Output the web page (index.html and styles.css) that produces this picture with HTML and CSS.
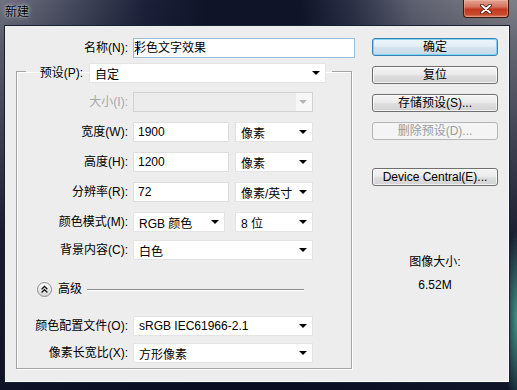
FILE: index.html
```html
<!DOCTYPE html>
<html>
<head>
  <title>新建</title>
  <link rel="stylesheet" href="styles.css">
</head>
<body>
  <div class="window">
    <div class="titlebar">
      <span class="title">新建</span>
      <div class="close">
        <svg width="12" height="10" viewBox="0 0 12 10">
          <path d="M2 1.5 L10 8.5 M10 1.5 L2 8.5" stroke="#3a1208" stroke-width="3.6" stroke-linecap="round"/>
          <path d="M2 1.5 L10 8.5 M10 1.5 L2 8.5" stroke="#fff" stroke-width="2" stroke-linecap="round"/>
        </svg>
      </div>
    </div>

    <div class="client">
      <div class="main">
        <div class="name-row">
          <label>名称(N):</label>
          <div class="field focused"><span class="caret"></span><span class="clip">彩色文字效果</span></div>
        </div>

        <fieldset class="group">
          <legend>
            <div class="legend-row">
              <label>预设(P):</label>
              <div class="select preset">自定</div>
            </div>
          </legend>

          <div class="rows">
            <div class="row">
              <label class="disabled">大小(I):</label>
              <div class="select full disabled"></div>
            </div>
            <div class="row">
              <label>宽度(W):</label>
              <div class="field num">1900</div>
              <div class="select unit">像素</div>
            </div>
            <div class="row">
              <label>高度(H):</label>
              <div class="field num">1200</div>
              <div class="select unit">像素</div>
            </div>
            <div class="row">
              <label>分辨率(R):</label>
              <div class="field num">72</div>
              <div class="select unit">像素/英寸</div>
            </div>
            <div class="row">
              <label>颜色模式(M):</label>
              <div class="select mode">RGB 颜色</div>
              <div class="select unit bits">8 位</div>
            </div>
            <div class="row bg-row">
              <label>背景内容(C):</label>
              <div class="select full">白色</div>
            </div>

            <div class="advanced">
              <svg width="15" height="15" viewBox="0 0 15 15">
                <defs>
                  <linearGradient id="adv" x1="0" y1="0" x2="0" y2="1">
                    <stop offset="0" stop-color="#ffffff"/>
                    <stop offset="1" stop-color="#d4d4d4"/>
                  </linearGradient>
                </defs>
                <circle cx="7.5" cy="7.5" r="7" fill="url(#adv)" stroke="#8d8d8d"/>
                <path d="M4.6 7.2 L7.5 4.4 L10.4 7.2 M4.6 10.6 L7.5 7.8 L10.4 10.6" fill="none" stroke="#1e1e1e" stroke-width="1.4"/>
              </svg>
              <span class="adv-label">高级</span>
              <span class="adv-line"></span>
            </div>

            <div class="row profile-row">
              <label>颜色配置文件(O):</label>
              <div class="select full">sRGB IEC61966-2.1</div>
            </div>
            <div class="row aspect-row">
              <label>像素长宽比(X):</label>
              <div class="select full">方形像素</div>
            </div>
          </div>
        </fieldset>
      </div>

      <div class="side">
        <button class="btn default">确定</button>
        <button class="btn">复位</button>
        <button class="btn">存储预设(S)...</button>
        <button class="btn" disabled>删除预设(D)...</button>
        <button class="btn device">Device Central(E)...</button>

        <div class="info">
          <div>图像大小:</div>
          <div class="size">6.52M</div>
        </div>
      </div>
    </div>
  </div>
</body>
</html>
```

FILE: styles.css
```css
body {
  margin: 0;
  background: #0d1226;
  font-family: "Liberation Sans", "Noto Sans CJK SC", sans-serif;
  font-size: 12px;
  color: #000;
}
.window {
  width: 517px;
  height: 390px;
  display: flex;
  flex-direction: column;
  background:
    radial-gradient(ellipse 14px 90px at 517px 320px, rgba(70, 170, 150, 0.85), rgba(70, 170, 150, 0) 100%),
    linear-gradient(180deg, rgba(10, 14, 34, 0) 0%, rgba(10, 14, 34, 0.2) 10%, rgba(10, 14, 34, 0.85) 60%, rgba(10, 14, 34, 0.95) 100%),
    linear-gradient(90deg, #6f7380 0%, #4c5063 12%, #1c2139 28%, #0f1429 40%, #0f1429 58%, #2b3047 68%, #5e6170 80%, #74767f 92%, #7e8089 100%);
}

/* title bar */
.titlebar {
  height: 25px;
  display: flex;
  justify-content: space-between;
  align-items: flex-start;
}
.title {
  margin: 5px 0 0 5px;
  line-height: 15px;
  text-shadow: 0 0 5px rgba(255, 255, 255, 0.7), 0 0 2px rgba(255, 255, 255, 0.6);
}
.close {
  width: 44px;
  height: 17px;
  margin-right: 8px;
  border: 1px solid #3d1610;
  border-top: none;
  border-radius: 0 0 4px 4px;
  background: linear-gradient(180deg, #e2a796 0%, #d5725d 40%, #c2391f 55%, #c84a2c 85%, #d9866a 100%);
  box-shadow: inset 0 0 0 1px rgba(255, 200, 180, 0.35);
  display: flex;
  align-items: center;
  justify-content: center;
}

/* client area */
.client {
  flex: 1;
  margin: 0 7px 7px 4px;
  border: 1px solid #1b2030;
  background: #ededed;
  box-shadow: inset -1px -1px 0 #fafafa;
  display: flex;
  padding: 12px 11px 0 0;
}
.main {
  width: 350px;
}
label {
  text-align: right;
  white-space: nowrap;
  line-height: 20px;
}
label.disabled {
  color: #a8a8a8;
}

.name-row {
  display: flex;
  height: 20px;
}
.name-row label {
  width: 123px;
  margin-right: 5px;
}

.field {
  height: 20px;
  box-sizing: border-box;
  background: #fff;
  border: 1px solid #dedede;
  padding: 0 4px;
  line-height: 18px;
  white-space: nowrap;
  overflow: hidden;
}
.field.focused {
  width: 222px;
  border-color: #9bbcdb;
  display: flex;
  align-items: center;
  padding-left: 3px;
}
.caret {
  width: 1px;
  height: 14px;
  background: #000;
  flex-shrink: 0;
}
.clip {
  margin-left: -4px;
}
.field.num {
  width: 96px;
}

.select {
  height: 20px;
  box-sizing: border-box;
  background: #fff;
  border: 1px solid #e4e4e4;
  padding: 0 5px 0 5px;
  display: flex;
  align-items: center;
  justify-content: space-between;
  white-space: nowrap;
}
.select::after {
  content: "";
  border-left: 4px solid transparent;
  border-right: 4px solid transparent;
  border-top: 4px solid #000;
}
.select.disabled {
  background: linear-gradient(90deg, #ececec 0, #ececec 162px, #f7f7f7 162px);
  border-color: #d2d2d2;
  justify-content: flex-end;
}
.select.disabled::after {
  border-top-color: #b5b5b5;
}
.select.preset {
  width: 237px;
}
.select.full {
  width: 180px;
}
.select.unit {
  width: 78px;
  margin-left: 6px;
}
.select.mode {
  width: 92px;
}
.select.bits {
  margin-left: 10px;
}

/* group box */
.group {
  margin: 1px 3px 0 11px;
  padding: 0;
  min-width: 0;
  border: 1px solid #a4a4a4;
  box-shadow: 1px 1px 0 #fff, inset 1px 1px 0 #fff;
}
.group legend {
  margin-left: 9px;
  padding: 4px 6px 0 0;
}
.legend-row {
  display: flex;
}
.legend-row label {
  width: 57px;
  margin-right: 6px;
}

.rows {
  display: flex;
  flex-direction: column;
  gap: 10px;
  padding: 9px 0 5px 0;
}
.row {
  display: flex;
  height: 20px;
}
.row label {
  width: 111px;
  margin-right: 5px;
}
.bg-row {
  margin-top: -2px;
}

.advanced {
  display: flex;
  align-items: center;
  height: 15px;
  margin-top: 12px;
  padding-left: 20px;
}
.adv-label {
  margin-left: 6px;
  line-height: 15px;
}
.adv-line {
  margin-left: 5px;
  width: 217px;
  height: 1px;
  background: #8c8c8c;
  box-shadow: 0 1px 0 #fff;
}
.profile-row {
  margin-top: 9px;
}
.aspect-row {
  margin-top: -3px;
}

/* buttons */
.side {
  margin-left: 17px;
  width: 126px;
  display: flex;
  flex-direction: column;
  gap: 10px;
}
.btn {
  height: 18px;
  padding: 0;
  font: inherit;
  color: #000;
  border: 1px solid #707070;
  border-radius: 3px;
  background: linear-gradient(180deg, #f4f4f4 0%, #ececec 45%, #dedede 55%, #d2d2d2 100%);
  box-shadow: inset 0 0 0 1px rgba(255, 255, 255, 0.7);
  line-height: 16px;
}
.btn.default {
  border-color: #3c7fb1;
  background: linear-gradient(180deg, #eef6fb 0%, #e3eef6 45%, #d3e3ee 55%, #c8dbe8 100%);
  box-shadow: inset 0 0 0 1px #7fd4f5;
}
.btn:disabled {
  border-color: #b4b7b9;
  background: #f4f4f4;
  color: #9b9b9b;
  box-shadow: none;
}
.btn.device {
  margin-top: 18px;
}

.info {
  margin-top: 59px;
  text-align: center;
  line-height: 14px;
  display: flex;
  flex-direction: column;
  gap: 9px;
}
```
